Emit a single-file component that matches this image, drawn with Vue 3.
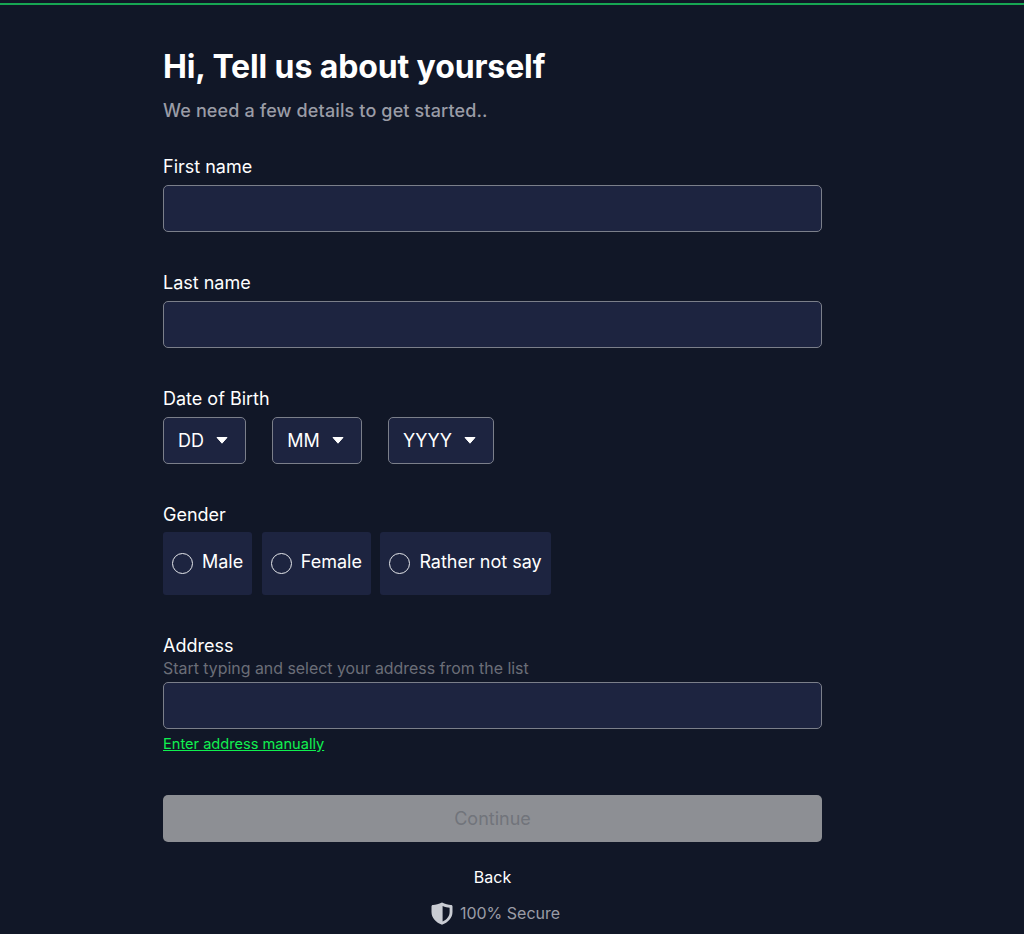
<script setup>
const genders = ['Male', 'Female', 'Rather not say']
const dates = ['DD', 'MM', 'YYYY']
</script>

<template>
  <div class="page">
    <div class="progress"></div>
    <main class="form">
      <h1>Hi, Tell us about yourself</h1>
      <p class="sub">We need a few details to get started..</p>

      <section class="field first">
        <label>First name</label>
        <div class="input"></div>
      </section>

      <section class="field">
        <label>Last name</label>
        <div class="input"></div>
      </section>

      <section class="field">
        <label>Date of Birth</label>
        <div class="dates">
          <div v-for="d in dates" :key="d" class="select">
            <span>{{ d }}</span>
            <svg class="caret" width="12" height="7" viewBox="0 0 12 7">
              <path d="M1 .5 H11 L6 6.2 Z" fill="#fff" stroke="#fff" stroke-width="1" stroke-linejoin="round" />
            </svg>
          </div>
        </div>
      </section>

      <section class="field gender">
        <label>Gender</label>
        <div class="genders">
          <div v-for="g in genders" :key="g" class="radio">
            <i class="dot"></i>
            <span>{{ g }}</span>
          </div>
        </div>
      </section>

      <section class="field address">
        <label>Address</label>
        <div class="hint">Start typing and select your address from the list</div>
        <div class="input"></div>
        <a class="manual">Enter address manually</a>
      </section>

      <button class="continue" disabled>Continue</button>
      <div class="back">Back</div>
      <div class="secure">
        <svg width="22" height="23" viewBox="0 0 22 23">
          <path d="M11 .5 C14 2 17.5 3 20 3 C21 3 21.5 3.6 21.5 4.5 V10 C21.5 16 17 20.5 11 22.8 C5 20.5 .5 16 .5 10 V4.5 C.5 3.6 1 3 2 3 C4.5 3 8 2 11 .5 Z" fill="#c9ccd3" />
          <path d="M11.6 4 C14 5 16.5 5.6 18.6 5.8 V10 C18.6 14.5 15.5 17.8 11.6 19.6 Z" fill="#111727" />
        </svg>
        <span>100% Secure</span>
      </div>
    </main>
  </div>
</template>

<style>
html, body { margin: 0; background: #111727; }
</style>

<style scoped>
.page {
  height: 934px;
  overflow: hidden;
  background: #111727;
  font-family: Inter, "Liberation Sans", sans-serif;
  color: #fff;
  box-sizing: border-box;
}
.progress {
  height: 2px;
  margin-top: 3px;
  background: #17a653;
}
.form {
  width: 659px;
  margin-left: 163px;
  padding-top: 40px;
}
h1 {
  margin: 0;
  font-size: 32px;
  line-height: 44px;
  font-weight: 700;
  letter-spacing: -0.12px;
}
.sub {
  margin: 9px 0 0;
  font-size: 18px;
  line-height: 26px;
  font-weight: 500;
  letter-spacing: 0.13px;
  color: #9a9ca6;
}
.field { margin-top: 38px; }
.field.first { margin-top: 30px; }
label {
  display: block;
  font-size: 18px;
  line-height: 26px;
  font-weight: 400;
  margin-bottom: 5px;
}
.input {
  height: 47px;
  box-sizing: border-box;
  border: 1px solid #7b7f8a;
  border-radius: 5px;
  background: #1d2440;
}
.dates { display: flex; gap: 26px; }
.select {
  height: 47px;
  box-sizing: border-box;
  border: 1px solid #7b7f8a;
  border-radius: 5px;
  background: #1d2440;
  display: flex;
  align-items: center;
  gap: 12px;
  padding: 0 17px 0 14px;
  font-size: 18px;
  letter-spacing: 0.1px;
}
.caret { display: block; }
.gender label { margin-bottom: 4px; }
.genders { display: flex; gap: 9.5px; }
.radio {
  height: 63px;
  box-sizing: border-box;
  background: #1d2440;
  border-radius: 3px;
  display: flex;
  align-items: center;
  gap: 9px;
  padding: 0 9px;
  font-size: 18px;
  font-weight: 400;
}
.radio span { margin-top: -4px; }
.dot {
  width: 21px;
  height: 21px;
  box-sizing: border-box;
  border: 1px solid #e5e7eb;
  border-radius: 50%;
}
.address label { margin-bottom: 0; }
.hint {
  font-size: 15.9px;
  line-height: 20px;
  color: #6b6e78;
  margin-bottom: 3px;
}
.manual {
  display: block;
  margin-top: 5px;
  font-size: 14.6px;
  line-height: 20px;
  font-weight: 400;
  color: #10f050;
  text-decoration: underline;
}
.continue {
  display: block;
  width: 100%;
  height: 47px;
  margin-top: 41px;
  border: none;
  border-radius: 5px;
  background: #8d8f94;
  color: #71747b;
  font-family: inherit;
  font-size: 18px;
  font-weight: 400;
}
.back {
  margin-top: 24px;
  text-align: center;
  font-size: 16px;
  line-height: 22px;
  font-weight: 400;
}
.secure {
  margin-top: 13px;
  padding-left: 6px;
  display: flex;
  align-items: center;
  justify-content: center;
  gap: 7px;
  font-size: 16px;
  line-height: 24px;
  color: #9a9ca6;
}
</style>
